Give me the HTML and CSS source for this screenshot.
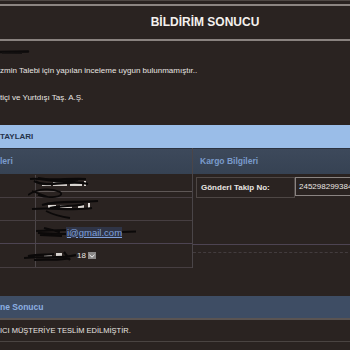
FILE: index.html
```html
<!DOCTYPE html>
<html lang="tr">

<head>
    <meta charset="UTF-8">
    <meta name="viewport" content="width=device-width, initial-scale=1.0">
    <link rel="stylesheet" href="styles.css">
    <title>Bildirim Sonucu</title>
</head>

<body>
    <div class="top">
        <h1 class="title">BİLDİRİM SONUCU</h1>
    </div>

    <div class="msg">
        <svg class="blot" width="30" height="6" viewBox="0 0 30 6">
            <path d="M0 3 L28 2.5" stroke="#0d0b0b" stroke-width="2.5" stroke-linecap="round" />
            <path d="M2 4 L22 4.2" stroke="#151212" stroke-width="1.5" />
        </svg>
        <p class="line1">zmin Talebi için yapılan inceleme uygun bulunmamıştır..</p>
        <p class="line2">tiçi ve Yurtdışı Taş. A.Ş.</p>
    </div>

    <div class="band">TAYLARI</div>

    <div class="panels">
        <div class="left">
            <div class="head">leri</div>
            <div class="row r1">
                <div class="key"></div>
                <div class="val">
                    <svg class="scrib" width="66" height="24" viewBox="0 0 66 24">
                        <rect x="14" y="8" width="9" height="3" fill="#d8d4d0" />
                        <rect x="25" y="7" width="14" height="4" fill="#cfcac6" />
                        <rect x="42" y="8" width="12" height="3" fill="#d8d4d0" />
                        <rect x="56" y="6" width="2" height="5" fill="#e0dcd8" />
                        <path d="M2 4 C14 2 30 10 50 5 M6 6 C20 14 40 4 60 9 M10 3 C24 6 40 3 58 4" stroke="#0b0909" stroke-width="2.2" fill="none" />
                        <path d="M0 20 C10 13 24 13 32 17 C38 22 20 24 10 20 M4 16 L20 22" stroke="#0b0909" stroke-width="1.8" fill="none" />
                    </svg>
                </div>
            </div>
            <div class="row r2">
                <div class="key"></div>
                <div class="val">
                    <svg class="scrib" width="74" height="20" viewBox="0 0 74 20">
                        <rect x="20" y="6" width="8" height="3" fill="#d8d4d0" />
                        <rect x="32" y="6" width="12" height="3" fill="#cfcac6" />
                        <rect x="50" y="6" width="6" height="3" fill="#d8d4d0" />
                        <rect x="60" y="4" width="2" height="6" fill="#e0dcd8" />
                        <path d="M14 6 C30 1 50 4 70 2 M4 10 C24 8 44 12 64 9 M22 9 C34 6 46 8 56 5" stroke="#0b0909" stroke-width="2.2" fill="none" />
                        <path d="M18 12 C26 16 34 18 42 19" stroke="#0b0909" stroke-width="1.8" fill="none" />
                    </svg>
                </div>
            </div>
            <div class="row r3">
                <div class="key"></div>
                <div class="val">
                    <svg class="scrib s3" width="30" height="12" viewBox="0 0 30 12">
                        <path d="M0 5 L30 4 M2 7 L30 8 M8 2 L24 6 M4 9 L26 10" stroke="#0b0909" stroke-width="2.2" fill="none" />
                    </svg>
                    <a class="mail" href="#">i@gmail.com</a>
                    <svg class="tail" width="14" height="4" viewBox="0 0 14 4">
                        <path d="M0 2 L14 1.5" stroke="#0b0909" stroke-width="1.8" />
                    </svg>
                </div>
            </div>
            <div class="row r4">
                <div class="key"></div>
                <div class="val">
                    <svg class="scrib s4" width="52" height="12" viewBox="0 0 52 12">
                        <rect x="20" y="4" width="8" height="3" fill="#cfcac6" />
                        <rect x="32" y="3" width="6" height="4" fill="#d8d4d0" />
                        <path d="M0 8 C16 6 34 9 52 5 M10 10 C24 9 36 11 46 8 M40 2 L46 10 M4 6 C14 4 24 5 30 4" stroke="#0b0909" stroke-width="2.2" fill="none" />
                    </svg>
                    <span class="num">18</span>
                    <span class="drop">
                        <svg width="6" height="4" viewBox="0 0 6 4"><path d="M0.5 0.8 L3 3.2 L5.5 0.8" stroke="#f2f2f2" stroke-width="1" fill="none" /></svg>
                    </span>
                </div>
            </div>
        </div>

        <div class="right">
            <div class="head">Kargo Bilgileri</div>
            <div class="kargo">
                <div class="label">Gönderi Takip No:</div>
                <div class="value">245298299384</div>
            </div>
            <div class="rule"></div>
            <div class="rule dashed"></div>
        </div>
    </div>

    <div class="result-head">ne Sonucu</div>
    <div class="result-text">ICI MÜŞTERİYE TESLİM EDİLMİŞTİR.</div>
</body>

</html>
```

FILE: styles.css
```css
* {
    margin: 0;
    padding: 0;
    box-sizing: border-box;
}

body {
    width: 350px;
    height: 350px;
    overflow: hidden;
    background-color: #2a2321;
    color: #e9e5e2;
    font-family: "Liberation Sans", Arial, sans-serif;
}

/* kopf */
.top {
    border-top: 1px solid #4f4845;
    padding-top: 3px;
}

.title {
    height: 37px;
    padding-left: 60px;
    border-top: 2px solid #8c8582;
    border-bottom: 2px solid #89827f;
    font-size: 12px;
    line-height: 33px;
    text-align: center;
    color: #f4f1ee;
}

.msg {
    padding-top: 8px;
    font-size: 8px;
    line-height: 12px;
}

.blot {
    display: block;
}

.line1 {
    margin-top: 10px;
}

.line2 {
    margin-top: 15px;
}

.band {
    margin-top: 21px;
    height: 23px;
    background-color: #9abde8;
    color: #25334b;
    font-size: 8px;
    font-weight: bold;
    line-height: 23px;
}

/* tabellen */
.panels {
    display: grid;
    grid-template-columns: 193px 1fr;
}

.left {
    border-right: 1px solid #4a4548;
}

.head {
    height: 26px;
    border-top: 1px solid #2c3340;
    background: linear-gradient(#3d495b, #364253);
    color: #7a9bcb;
    font-size: 8.5px;
    font-weight: bold;
    line-height: 25px;
}

.right .head {
    padding-left: 7px;
}

.row {
    display: grid;
    grid-template-columns: 36px 1fr;
    height: 23px;
    border-bottom: 1px solid #463e41;
}

.r1 {
    margin-top: 1px;
}

.r3 {
    border-bottom-color: #4d4452;
}

.r4 {
    height: 24px;
}

.key {
    border-right: 1px solid #4c4648;
}

.val {
    display: flex;
    justify-content: flex-start;
    align-items: center;
    font-size: 8px;
}

.val svg {
    flex-shrink: 0;
}

.r1 .val {
    border-bottom: 1px solid #5e5756;
    height: 17px;
    align-items: flex-start;
}

.scrib {
    display: block;
    margin-left: -8px;
}

.s3 {
    margin-left: 0;
}

.s4 {
    margin-left: -12px;
}

.mail {
    padding-left: 1px;
    color: #7fa1dc;
    background-color: #2f3446;
    font-size: 9.5px;
    white-space: nowrap;
}

.tail {
    display: block;
}

.num {
    margin-left: 1px;
    color: #e9e5e2;
}

.drop {
    display: inline-flex;
    align-items: center;
    justify-content: center;
    width: 8px;
    height: 7px;
    margin-left: 2px;
    background-color: #8b8989;
}

.kargo {
    display: flex;
    margin: 3px 0 0 3px;
    height: 21px;
}

.label {
    width: 99px;
    padding-left: 4px;
    border: 1px solid #4e4745;
    font-size: 8px;
    font-weight: bold;
    line-height: 19px;
}

.value {
    flex: 1;
    height: 19px;
    padding-left: 3px;
    border: 1px solid #8a8482;
    font-size: 8px;
    line-height: 17px;
    white-space: nowrap;
    overflow: hidden;
}

.rule {
    margin-top: 46px;
    border-top: 1px solid #4d4452;
}

.rule.dashed {
    margin: 7px 0 0 0;
    border-top: 1px dashed #433c3e;
}

/* sonuc */
.result-head {
    margin-top: 28px;
    height: 24px;
    border-bottom: 2px solid #5a5452;
    background-color: #3e4d64;
    color: #8db0e2;
    font-size: 8.5px;
    font-weight: bold;
    line-height: 22px;
}

.result-text {
    height: 22px;
    border-bottom: 1px solid #4a4442;
    font-size: 7.5px;
    line-height: 22px;
}
```
